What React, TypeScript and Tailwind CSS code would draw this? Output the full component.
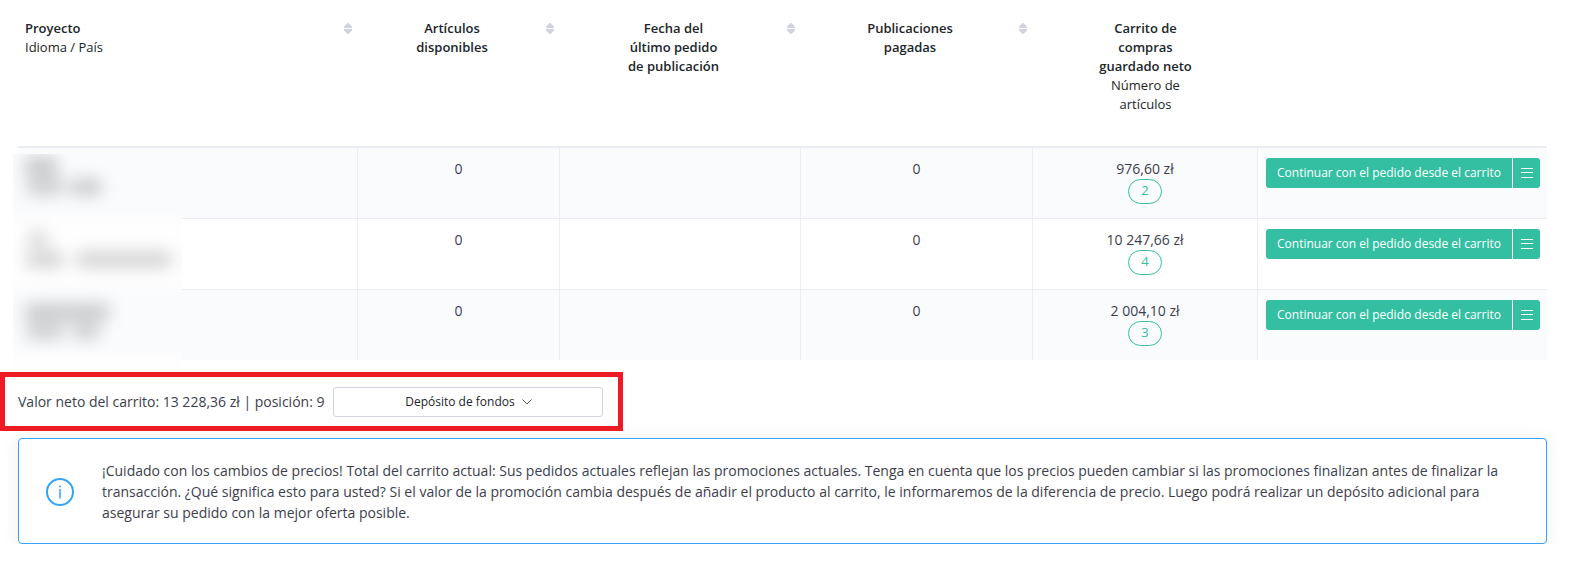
import { clsx } from 'clsx';
import type { ReactNode } from 'react';

interface CartRow {
  id: number;
  available: number;
  paid: number;
  total: string;
  items: number;
}

const rows: CartRow[] = [
  { id: 1, available: 0, paid: 0, total: '976,60 zł', items: 2 },
  { id: 2, available: 0, paid: 0, total: '10 247,66 zł', items: 4 },
  { id: 3, available: 0, paid: 0, total: '2 004,10 zł', items: 3 },
];

function SortIcon() {
  return (
    <svg width="8" height="11" viewBox="0 0 8 11" fill="#d1d3e0" aria-hidden="true">
      <path d="M3.5 0H4.5L8 3.5V5H0V3.5Z" />
      <path d="M0 6H8V7.5L4.5 11H3.5L0 7.5Z" />
    </svg>
  );
}

function MenuIcon() {
  return (
    <svg width="12" height="10" viewBox="0 0 12 10" fill="#fff" shapeRendering="crispEdges" aria-hidden="true">
      <path d="M0 0H12V1H0ZM0 4H12V5H0ZM0 9H12V10H0Z" />
    </svg>
  );
}

function ChevronIcon() {
  return (
    <svg width="10" height="6" viewBox="0 0 10 6" fill="none" stroke="#55565f" strokeWidth="1" aria-hidden="true">
      <path d="M0.5 0.5L5 5L9.5 0.5" />
    </svg>
  );
}

function InfoIcon() {
  return (
    <svg width="28" height="28" viewBox="0 0 28 28" fill="none" aria-hidden="true" className="shrink-0">
      <circle cx="14" cy="14" r="13" stroke="#36a3f7" strokeWidth="2" />
      <path d="M14 11V20.5" stroke="#36a3f7" strokeWidth="1.5" />
      <circle cx="14" cy="8.5" r="1" fill="#36a3f7" />
    </svg>
  );
}

function HeaderCell({ children, sortable, left }: { children?: ReactNode; sortable?: boolean; left?: boolean }) {
  return (
    <th
      scope="col"
      className="border-b-2 border-[#ebedf2] pb-8 align-top text-[13px] font-semibold leading-[19px] text-[#212529]"
    >
      <div className={clsx('flex items-start', sortable && 'pr-[6px]')}>
        <div className={clsx('flex-1', left ? 'pl-[7px] text-left' : 'text-center')}>{children}</div>
        {sortable && (
          <button type="button" aria-label="Ordenar" className="flex h-[19px] items-center">
            <SortIcon />
          </button>
        )}
      </div>
    </th>
  );
}

// Project names are hidden behind a soft smudge
function HiddenNames() {
  return (
    <div
      aria-hidden="true"
      className="absolute -bottom-3 -left-[5px] h-[218px] w-[169px] overflow-hidden bg-[linear-gradient(#fafbfd_25%,#fefefe_34%,#fefefe_57%,#fafbfd_66%,#fafbfd_88%,#fefefe_96%)]"
    >
      <div className="absolute left-[10px] top-[2px] h-[20px] w-[36px] rounded-full bg-black/18 blur-[8px]" />
      <div className="absolute left-[12px] top-[22px] h-[20px] w-[40px] rounded-full bg-black/16 blur-[8px]" />
      <div className="absolute left-[56px] top-[24px] h-[18px] w-[34px] rounded-full bg-black/18 blur-[8px]" />
      <div className="absolute left-[14px] top-[77px] h-[16px] w-[22px] rounded-full bg-black/14 blur-[8px]" />
      <div className="absolute left-[12px] top-[97px] h-[17px] w-[40px] rounded-full bg-black/16 blur-[8px]" />
      <div className="absolute left-[62px] top-[97px] h-[17px] w-[98px] rounded-full bg-black/16 blur-[8px]" />
      <div className="absolute left-[10px] top-[149px] h-[18px] w-[88px] rounded-full bg-black/18 blur-[8px]" />
      <div className="absolute left-[12px] top-[168px] h-[18px] w-[40px] rounded-full bg-black/16 blur-[8px]" />
      <div className="absolute left-[58px] top-[168px] h-[18px] w-[30px] rounded-full bg-black/16 blur-[8px]" />
    </div>
  );
}

export default function App() {
  return (
    <main className="bg-white pt-[19px] font-['Open_Sans',sans-serif] text-sm leading-[21px] text-[#3d3e4d]">
      <div className="relative ml-[18px] mr-[26px]">
        <table className="w-full table-fixed border-separate border-spacing-0">
          <colgroup>
            <col />
            <col className="w-[202px]" />
            <col className="w-[241px]" />
            <col className="w-[232px]" />
            <col className="w-[225px]" />
            <col className="w-[289px]" />
          </colgroup>
          <thead>
            <tr>
              <HeaderCell sortable left>
                Proyecto
                <div className="font-normal">Idioma / País</div>
              </HeaderCell>
              <HeaderCell sortable>
                Artículos
                <br />
                disponibles
              </HeaderCell>
              <HeaderCell sortable>
                Fecha del
                <br />
                último pedido
                <br />
                de publicación
              </HeaderCell>
              <HeaderCell sortable>
                Publicaciones
                <br />
                pagadas
              </HeaderCell>
              <HeaderCell>
                Carrito de
                <br />
                compras
                <br />
                guardado neto
                <div className="font-normal">
                  Número de
                  <br />
                  artículos
                </div>
              </HeaderCell>
              <HeaderCell />
            </tr>
          </thead>
          <tbody className="text-center [&_td]:border-[#ebedf2] [&_td]:align-top [&_td:not(:last-child)]:border-r [&_tr:not(:last-child)_td]:border-b">
            {rows.map((row) => (
              <tr key={row.id} className="h-[71px] odd:bg-[#fafbfd] last:h-[70px]">
                <td />
                <td className="pt-[10px]">{row.available}</td>
                <td />
                <td className="pt-[10px]">{row.paid}</td>
                <td className="pt-[10px]">
                  {row.total}
                  <div className="mx-auto h-[25px] w-[34px] rounded-full border border-[#34bfa3] text-[13px] text-[#34bfa3]">
                    {row.items}
                  </div>
                </td>
                <td className="pl-2 pr-[7px] pt-[10px]">
                  <div className="flex h-[30px] gap-px text-xs text-white">
                    <button type="button" className="flex-1 whitespace-nowrap rounded-l-[3px] bg-[#34bfa3] font-medium">
                      Continuar con el pedido desde el carrito
                    </button>
                    <button
                      type="button"
                      aria-label="Más opciones"
                      className="flex w-[27px] items-center justify-center rounded-r-[3px] bg-[#34bfa3]"
                    >
                      <MenuIcon />
                    </button>
                  </div>
                </td>
              </tr>
            ))}
          </tbody>
        </table>
        <HiddenNames />
      </div>

      <div className="relative mt-3 flex h-[59px] w-fit items-center gap-[9px] border-5 border-[#ed1c24] pl-[13px] pr-[15px]">
        <span>Valor neto del carrito: 13 228,36 zł | posición: 9</span>
        <button
          type="button"
          aria-haspopup="menu"
          className="flex h-[30px] w-[270px] items-center justify-center gap-[7px] rounded-[3px] border border-[#d1d3e0] text-xs font-medium text-[#212529]"
        >
          Depósito de fondos
          <ChevronIcon />
        </button>
      </div>

      <div className="ml-[18px] mr-[26px] mt-[7px] flex items-center gap-7 rounded-[4px] border border-[#36a3f7] bg-white pb-5 pl-[27px] pr-4 pt-[21px] shadow-[0_1px_15px_1px_rgba(69,65,78,0.08)]">
        <InfoIcon />
        <p>
          ¡Cuidado con los cambios de precios! Total del carrito actual: Sus pedidos actuales reflejan las promociones
          actuales. Tenga en cuenta que los precios pueden cambiar si las promociones finalizan antes de finalizar la
          transacción. ¿Qué significa esto para usted? Si el valor de la promoción cambia después de añadir el producto
          al carrito, le informaremos de la diferencia de precio. Luego podrá realizar un depósito adicional para
          asegurar su pedido con la mejor oferta posible.
        </p>
      </div>
    </main>
  );
}
